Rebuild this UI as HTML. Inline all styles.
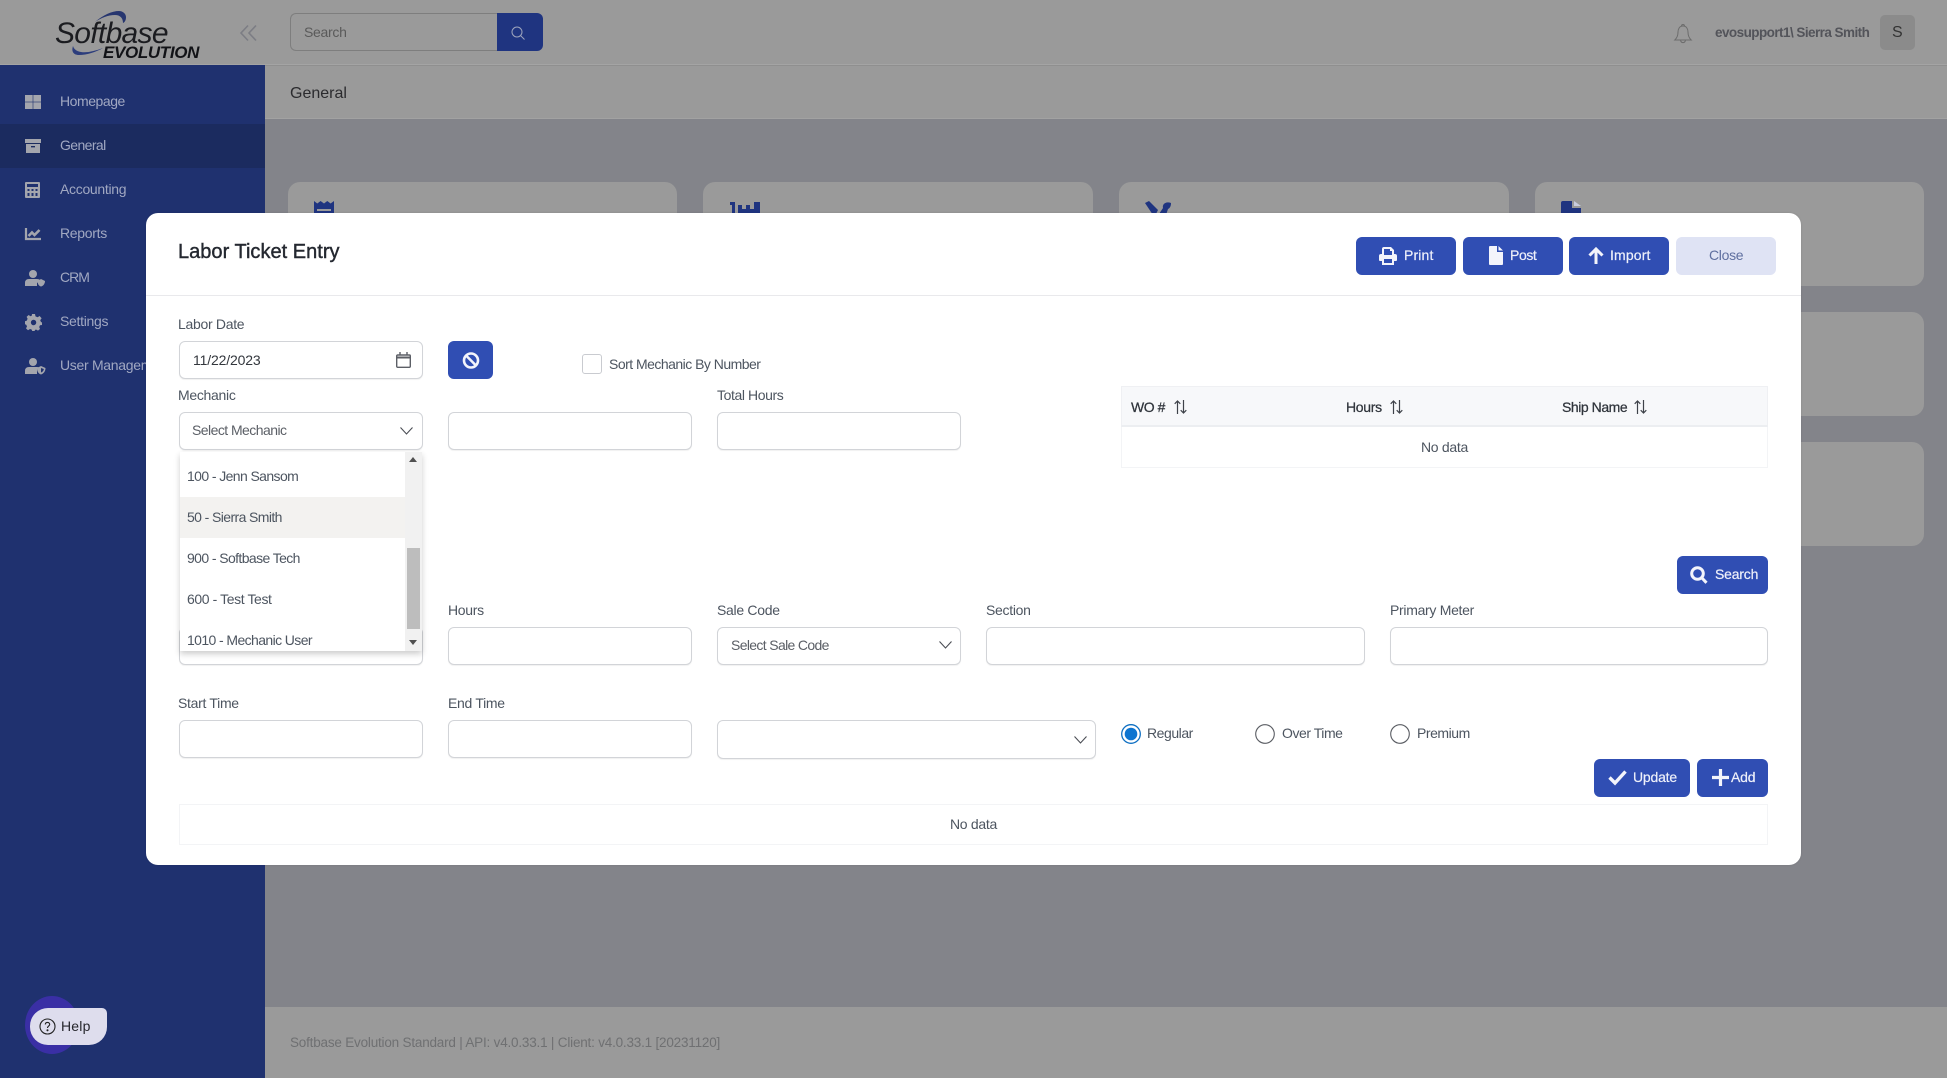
<!DOCTYPE html>
<html><head><meta charset="utf-8"><title>Labor Ticket Entry</title>
<style>
*{box-sizing:border-box}
html,body{margin:0;padding:0;width:1947px;height:1078px;overflow:hidden;background:#83848a;font-family:"Liberation Sans",sans-serif}
.a{position:absolute}
.t{position:absolute;white-space:nowrap;line-height:20px;height:20px;font-size:14px;letter-spacing:-.3px;color:#4d5560}
.dd{letter-spacing:-.6px}
.side{color:#a1a8c2;font-size:14px;letter-spacing:-.3px}
.inp{position:absolute;background:#fff;border:1px solid #d2d4d8;border-radius:6px;height:38px;box-shadow:0 1px 1px rgba(0,0,0,.06)}
.btn{position:absolute;background:#304eb3;border-radius:6px;height:38px}
.wt{color:#eef0fa;font-size:14px;-webkit-text-stroke:.2px #eef0fa;letter-spacing:-.2px}
.card{position:absolute;background:#9a9a9a;border-radius:12px}
svg{position:absolute;display:block;overflow:visible}
</style></head><body>

<!-- header -->
<div class="a" style="left:0;top:0;width:1947px;height:65px;background:#9a9a9a;border-bottom:1px solid #a4a4a4"></div>
<div class="a" style="left:265px;top:65px;width:1682px;height:54px;background:#9a9a9a;border-bottom:1px solid #a2a2a2;border-top:1px solid #8f8f8f"></div>

<!-- logo -->
<svg style="left:0;top:0" width="265" height="65">
<path d="M95 22C103 15 112 11 119 11C123 11 126 14 126 17C126 20 125 22 123 23C123 18 120 15 115 15C108 15 101 18 95 22Z" fill="#27366f"/>
<path d="M73 46C71 52 74 55 79 55C87 55 96 52 103 48C95 51 87 53 81 52C76 51 74 49 73 46Z" fill="#2c3d7c"/>
</svg>
<div class="t" style="left:55px;top:19px;height:30px;line-height:30px;font-size:30px;font-style:italic;letter-spacing:-.7px;color:#1b1c20">Softbase</div>
<div class="t" style="left:103px;top:43px;font-size:17px;font-weight:bold;font-style:italic;letter-spacing:-.35px;color:#121317">EVOLUTION</div>
<svg style="left:240px;top:25px" width="17" height="16" fill="none" stroke="#7c7d84" stroke-width="1.6"><path d="M8 0.5L1 8L8 15.5M16 0.5L9 8L16 15.5"/></svg>

<!-- search -->
<div class="a" style="left:290px;top:13px;width:208px;height:38px;background:#9a9a9a;border:1px solid #7e7e7e;border-right:0;border-radius:6px 0 0 6px"></div>
<div class="a" style="left:497px;top:13px;width:46px;height:38px;background:#1f3480;border-radius:0 6px 6px 0"></div>
<svg style="left:511px;top:26px" width="14" height="14" fill="none" stroke="#9ea5bd" stroke-width="1"><circle cx="6" cy="6" r="5"/><path d="M9.7 9.7L13.5 13.5"/></svg>
<div class="t" style="left:304px;top:22px;color:#5a5a5a">Search</div>

<!-- right header -->
<svg style="left:1674px;top:23px" width="18" height="21" fill="none" stroke="#6c6c6c" stroke-width="1"><path d="M9 3C5.5 3 4 6 4 9C4 13 3 15 0.8 17H17.2C15 15 14 13 14 9C14 6 12.5 3 9 3ZM7.5 3C7.5 1 10.5 1 10.5 3M6.5 17C7 20.5 11 20.5 11.5 17"/></svg>
<div class="t" style="left:1715px;top:23px;font-weight:bold;font-size:13.5px;letter-spacing:-.55px;color:#53545a">evosupport1\ Sierra Smith</div>
<div class="a" style="left:1880px;top:15px;width:35px;height:35px;background:#8b8b8b;border-radius:5px"></div>
<div class="t" style="left:1892px;top:23px;font-size:16px;color:#333">S</div>

<div class="t" style="left:290px;top:84px;font-size:16px;letter-spacing:0;color:#2b2b2e">General</div>

<!-- cards -->
<div class="card" style="left:288px;top:182px;width:389px;height:104px"></div>
<div class="card" style="left:703px;top:182px;width:390px;height:104px"></div>
<div class="card" style="left:1119px;top:182px;width:390px;height:104px"></div>
<div class="card" style="left:1535px;top:182px;width:389px;height:104px"></div>
<div class="card" style="left:1535px;top:312px;width:389px;height:104px"></div>
<div class="card" style="left:1535px;top:442px;width:389px;height:104px"></div>
<div class="card" style="left:1119px;top:312px;width:390px;height:104px"></div>
<div class="card" style="left:1119px;top:442px;width:390px;height:104px"></div>
<svg style="left:314px;top:201px" width="20" height="14"><path d="M0 0L3.3 2.5L6.6 0L10 2.5L13.3 0L16.6 2.5L20 0V14H0Z" fill="#1f3480"/><rect x="3" y="8" width="14" height="2" fill="#9a9a9a"/></svg>
<svg style="left:730px;top:201px" width="30" height="14" fill="#1f3480"><path d="M0 1H5V14H2V4H0Z"/><path d="M8 4H12V8H16V4H20V8H24V1H30V14H8Z"/></svg>
<svg style="left:1145px;top:201px" width="27" height="14" fill="#1f3480"><path d="M0 2L4 0L13 9L11 13L8 14Z"/><path d="M26 2C21 0 17 3 18 7L14 13L21 14L23 8C25 7 26 5 26 2Z"/></svg>
<svg style="left:1561px;top:201px" width="20" height="14"><path d="M0 2Q0 0 2 0H11V7H20V14H0Z" fill="#1f3480"/><path d="M13 0L20 5H13Z" fill="#c9cde0"/></svg>

<!-- footer -->
<div class="a" style="left:265px;top:1007px;width:1682px;height:71px;background:#9a9a9a"></div>
<div class="t" style="left:290px;top:1033px;font-size:13.5px;letter-spacing:-.2px;color:#6f7072">Softbase Evolution Standard | API: v4.0.33.1 | Client: v4.0.33.1 [20231120]</div>

<!-- sidebar -->
<div class="a" style="left:0;top:65px;width:265px;height:1013px;background:#1f316f"></div>
<div class="a" style="left:0;top:124px;width:265px;height:44px;background:#1b2b5f"></div>
<div class="t side" style="left:60px;top:91px;letter-spacing:-.45px">Homepage</div>
<div class="t side" style="left:60px;top:135px;letter-spacing:-.6px">General</div>
<div class="t side" style="left:60px;top:179px">Accounting</div>
<div class="t side" style="left:60px;top:223px">Reports</div>
<div class="t side" style="left:60px;top:267px;letter-spacing:-1px">CRM</div>
<div class="t side" style="left:60px;top:311px">Settings</div>
<div class="t side" style="left:60px;top:355px">User Management</div>

<svg style="left:25px;top:95px" width="16" height="14" fill="#a3a5ad"><rect width="7.7" height="6.7"/><rect x="8.3" width="7.7" height="6.7"/><rect y="7.3" width="7.7" height="6.7"/><rect x="8.3" y="7.3" width="7.7" height="6.7"/></svg>
<svg style="left:25px;top:139px" width="16" height="14" fill="#a3a5ad"><rect width="16" height="4"/><path fill-rule="evenodd" d="M1 5H15V14H1ZM6 7V8.4H10V7Z"/></svg>
<svg style="left:25px;top:182px" width="15" height="16" fill="#a3a5ad"><path fill-rule="evenodd" d="M1 0H14Q15 0 15 1V15Q15 16 14 16H1Q0 16 0 15V1Q0 0 1 0ZM2 2V5H13V2ZM2.5 7V9H4.5V7ZM6.5 7V9H8.5V7ZM10.5 7V9H12.5V7ZM2.5 11V14H4.5V11ZM6.5 11V14H8.5V11ZM10.5 11V14H12.5V11Z"/></svg>
<svg style="left:25px;top:228px" width="16" height="12" fill="none" stroke="#a3a5ad"><path stroke-width="2.2" d="M1 0V11H16"/><path stroke-width="2.6" d="M3.5 8L7 4.5L9.5 7L14.5 2"/></svg>
<svg style="left:25px;top:270px" width="20" height="16" fill="#a3a5ad"><circle cx="8" cy="4" r="4"/><path d="M0 16V13Q0 9 4 9H12Q14 9 15 10L12 13V16Z"/><path d="M16 9L20 11C20 14 18 16 16 16.5C14 16 12.5 14 12.5 11Z"/></svg>
<svg style="left:25px;top:314px" width="17" height="17" fill="#a3a5ad"><path fill-rule="evenodd" d="M7 0H10L10.5 2.4L12.6 3.3L14.6 2L16.6 4.2L15.2 6.2L16 8L17 8.5V11L15 11.3L14.2 13L15 15L13 16.6L11 15.5L10 16L9.6 17H7.2L6.7 15.6L5 15L3 16.2L1 14.4L2 12.4L1.2 10.7L0 10.2V7.2L1.8 6.6L2.6 4.8L1.6 2.9L3.6 1L5.5 2.2L6.8 1.6ZM8.5 5.8A2.7 2.7 0 1 0 8.6 11.2A2.7 2.7 0 1 0 8.5 5.8Z"/></svg>
<svg style="left:25px;top:358px" width="20" height="16" fill="#a3a5ad"><circle cx="8" cy="4" r="4"/><path d="M0 16V13Q0 9 4 9H12Q13.5 9 14 9.6L12 11V16Z"/><path fill-rule="evenodd" d="M16 8L20.5 10C20.5 13.5 18.5 15.8 16 16.5C13.5 15.8 12 13.5 12 10ZM16 10V14.5C17.5 14 18.8 12.5 18.8 11Z"/></svg>

<!-- help -->
<div class="a" style="left:25px;top:996px;width:54px;height:58px;background:#3a2fa5;border-radius:50%"></div>
<div class="a" style="left:30px;top:1008px;width:77px;height:37px;background:#dedded;border-radius:18px 5px 18px 18px"></div>
<svg style="left:39px;top:1018px" width="17" height="17" fill="none" stroke="#222" stroke-width="1.1"><circle cx="8.5" cy="8.5" r="7.5"/><path d="M6.3 6.5C6.4 3.8 10.7 3.8 10.7 6.4C10.7 8 8.5 8.2 8.5 10"/><circle cx="8.5" cy="12.3" r=".5" fill="#222"/></svg>
<div class="t" style="left:61px;top:1016px;color:#26262c;letter-spacing:.2px">Help</div>

<!-- modal -->
<div class="a" style="left:146px;top:213px;width:1655px;height:652px;background:#fff;border-radius:12px;box-shadow:0 0 2px rgba(0,0,0,.1)"></div>
<div class="a" style="left:146px;top:295px;width:1655px;height:1px;background:#e9e9ec"></div>
<div class="t" style="left:178px;top:241px;padding-top:1px;font-size:20px;letter-spacing:.02px;color:#242830;-webkit-text-stroke:.4px #242830">Labor Ticket Entry</div>

<!-- top buttons -->
<div class="btn" style="left:1356px;top:237px;width:100px"></div>
<div class="btn" style="left:1463px;top:237px;width:100px"></div>
<div class="btn" style="left:1569px;top:237px;width:100px"></div>
<div class="btn" style="left:1676px;top:237px;width:100px;background:#dfe3f4"></div>
<svg style="left:1379px;top:247px" width="18" height="18" fill="#f3f4fb"><path fill-rule="evenodd" d="M3 7V2Q3 0 5 0H12L15 3V7H16Q18 7 18 9V13Q18 14 17 14H15V18H3V14H1Q0 14 0 13V9Q0 7 2 7ZM5 2V8H13V4H11V2ZM5 12V16H13V12Z"/></svg>
<div class="t wt" style="left:1404px;top:245px;letter-spacing:.15px">Print</div>
<svg style="left:1489px;top:246px" width="14" height="19" fill="#f3f4fb"><path d="M1 0H8V6H14V18Q14 19 13 19H1Q0 19 0 18V1Q0 0 1 0ZM9.5 0L14 4.5H9.5Z"/></svg>
<div class="t wt" style="left:1510px;top:245px;letter-spacing:-.4px">Post</div>
<svg style="left:1588px;top:247px" width="16" height="17" fill="none" stroke="#f3f4fb" stroke-width="3"><path d="M8 17V2M1.5 8.5L8 2L14.5 8.5"/></svg>
<div class="t wt" style="left:1610px;top:245px;letter-spacing:.15px">Import</div>
<div class="t" style="left:1709px;top:245px;color:#5f6f9f">Close</div>

<!-- row 1 -->
<div class="t" style="left:178px;top:314px">Labor Date</div>
<div class="inp" style="left:179px;top:341px;width:244px"></div>
<div class="t" style="left:193px;top:350px;color:#33373d;letter-spacing:-.15px">11/22/2023</div>
<svg style="left:396px;top:352px" width="15" height="16" fill="none" stroke="#5c5f66" stroke-width="1.4"><rect x=".7" y="3" width="13.6" height="12.3" rx="1"/><path d="M.7 5.5H14.3" stroke-width="2"/><path d="M4 0V3M11 0V3"/></svg>
<div class="btn" style="left:448px;top:341px;width:45px"></div>
<svg style="left:462px;top:352px" width="18" height="17" fill="none" stroke="#f3f4fb" stroke-width="2.6"><circle cx="9" cy="8.5" r="7"/><path d="M4 3.5L14 13.5"/></svg>
<div class="a" style="left:582px;top:354px;width:20px;height:20px;background:#fff;border:1px solid #c9cbd0;border-radius:3px"></div>
<div class="t" style="left:609px;top:354px;letter-spacing:-.52px">Sort Mechanic By Number</div>

<!-- row 2 -->
<div class="t" style="left:178px;top:385px">Mechanic</div>
<div class="inp" style="left:179px;top:412px;width:244px"></div>
<div class="t" style="left:192px;top:420px;color:#5b5f66;letter-spacing:-.55px">Select Mechanic</div>
<svg style="left:400px;top:427px" width="13" height="8" fill="none" stroke="#4a4d54" stroke-width="1.1"><path d="M.5 .5L6.5 7L12.5 .5"/></svg>
<div class="inp" style="left:448px;top:412px;width:244px"></div>
<div class="t" style="left:717px;top:385px;letter-spacing:-.4px">Total Hours</div>
<div class="inp" style="left:717px;top:412px;width:244px"></div>

<!-- table 1 -->
<div class="a" style="left:1121px;top:386px;width:647px;height:82px;border:1px solid #f3f4f6"></div>
<div class="a" style="left:1121px;top:386px;width:647px;height:41px;background:#f7f8fa;border:1px solid #eff0f3;border-bottom:2px solid #eceef1"></div>
<div class="t" style="left:1131px;top:397px;color:#2f343b;-webkit-text-stroke:.25px #2f343b;letter-spacing:-.45px">WO #</div>
<div class="t" style="left:1346px;top:397px;color:#2f343b;-webkit-text-stroke:.25px #2f343b">Hours</div>
<div class="t" style="left:1562px;top:397px;color:#2f343b;-webkit-text-stroke:.25px #2f343b;letter-spacing:-.45px">Ship Name</div>
<svg style="left:1174px;top:400px" width="13" height="14" fill="none" stroke="#3e4249" stroke-width="1.2"><path d="M3.5 14V1M.7 3.8L3.5 1L6.3 3.8M9.5 0V13M6.7 10.2L9.5 13L12.3 10.2"/></svg>
<svg style="left:1390px;top:400px" width="13" height="14" fill="none" stroke="#3e4249" stroke-width="1.2"><path d="M3.5 14V1M.7 3.8L3.5 1L6.3 3.8M9.5 0V13M6.7 10.2L9.5 13L12.3 10.2"/></svg>
<svg style="left:1634px;top:400px" width="13" height="14" fill="none" stroke="#3e4249" stroke-width="1.2"><path d="M3.5 14V1M.7 3.8L3.5 1L6.3 3.8M9.5 0V13M6.7 10.2L9.5 13L12.3 10.2"/></svg>
<div class="t" style="left:1421px;top:437px">No data</div>

<!-- search btn -->
<div class="btn" style="left:1677px;top:556px;width:91px"></div>
<svg style="left:1690px;top:566px" width="18" height="18" fill="none" stroke="#f3f4fb" stroke-width="3"><circle cx="7.5" cy="7.5" r="5.8"/><path d="M11.5 11.5L16.5 16.8"/></svg>
<div class="t wt" style="left:1715px;top:564px">Search</div>

<!-- row 3 -->
<div class="inp" style="left:179px;top:627px;width:244px"></div>
<div class="t" style="left:448px;top:600px">Hours</div>
<div class="inp" style="left:448px;top:627px;width:244px"></div>
<div class="t" style="left:717px;top:600px">Sale Code</div>
<div class="inp" style="left:717px;top:627px;width:244px"></div>
<div class="t" style="left:731px;top:635px;color:#5b5f66;letter-spacing:-.65px">Select Sale Code</div>
<svg style="left:939px;top:641px" width="13" height="8" fill="none" stroke="#4a4d54" stroke-width="1.1"><path d="M.5 .5L6.5 7L12.5 .5"/></svg>
<div class="t" style="left:986px;top:600px">Section</div>
<div class="inp" style="left:986px;top:627px;width:379px"></div>
<div class="t" style="left:1390px;top:600px">Primary Meter</div>
<div class="inp" style="left:1390px;top:627px;width:378px"></div>

<!-- dropdown -->
<div class="a" style="left:180px;top:452px;width:242px;height:199px;background:#fff;box-shadow:0 3px 6px rgba(0,0,0,.2)"></div>
<div class="a" style="left:180px;top:497px;width:225px;height:41px;background:#f3f2f0"></div>
<div class="a" style="left:405px;top:452px;width:17px;height:199px;background:#f1f1f1"></div>
<div class="a" style="left:407px;top:548px;width:13px;height:81px;background:#bdbdbd"></div>
<svg style="left:409px;top:457px" width="8" height="5" fill="#505050"><path d="M0 5L4 0L8 5Z"/></svg>
<svg style="left:409px;top:640px" width="8" height="5" fill="#505050"><path d="M0 0H8L4 5Z"/></svg>
<div class="t dd" style="left:187px;top:466px">100 - Jenn Sansom</div>
<div class="t dd" style="left:187px;top:507px">50 - Sierra Smith</div>
<div class="t dd" style="left:187px;top:548px">900 - Softbase Tech</div>
<div class="t dd" style="left:187px;top:589px;letter-spacing:-.4px">600 - Test Test</div>
<div class="t dd" style="left:187px;top:630px">1010 - Mechanic User</div>

<!-- row 4 -->
<div class="t" style="left:178px;top:693px">Start Time</div>
<div class="inp" style="left:179px;top:720px;width:244px"></div>
<div class="t" style="left:448px;top:693px">End Time</div>
<div class="inp" style="left:448px;top:720px;width:244px"></div>
<div class="inp" style="left:717px;top:720px;width:379px;height:39px"></div>
<svg style="left:1074px;top:736px" width="13" height="8" fill="none" stroke="#4a4d54" stroke-width="1.1"><path d="M.5 .5L6.5 7L12.5 .5"/></svg>

<svg style="left:1121px;top:724px" width="20" height="20"><circle cx="10" cy="10" r="9.3" fill="#fff" stroke="#0e6fc2" stroke-width="1.3"/><circle cx="10" cy="10" r="6.3" fill="#0c74d0"/></svg>
<div class="t" style="left:1147px;top:723px;letter-spacing:-.45px">Regular</div>
<svg style="left:1255px;top:724px" width="20" height="20"><circle cx="10" cy="10" r="9.3" fill="#fff" stroke="#5a5d63" stroke-width="1.1"/></svg>
<div class="t" style="left:1282px;top:723px;letter-spacing:-.45px">Over Time</div>
<svg style="left:1390px;top:724px" width="20" height="20"><circle cx="10" cy="10" r="9.3" fill="#fff" stroke="#5a5d63" stroke-width="1.1"/></svg>
<div class="t" style="left:1417px;top:723px;letter-spacing:-.45px">Premium</div>

<div class="btn" style="left:1594px;top:759px;width:96px"></div>
<div class="btn" style="left:1697px;top:759px;width:71px"></div>
<svg style="left:1608px;top:770px" width="19" height="15" fill="none" stroke="#f3f4fb" stroke-width="3.4"><path d="M1.5 7.5L7 13L17.5 1.5"/></svg>
<div class="t wt" style="left:1633px;top:767px">Update</div>
<svg style="left:1712px;top:769px" width="17" height="17" fill="none" stroke="#f3f4fb" stroke-width="3.2"><path d="M8.5 0V17M0 8.5H17"/></svg>
<div class="t wt" style="left:1731px;top:767px">Add</div>

<!-- table 2 -->
<div class="a" style="left:179px;top:804px;width:1589px;height:41px;border:1px solid #f3f4f6"></div>
<div class="t" style="left:950px;top:814px">No data</div>

</body></html>
